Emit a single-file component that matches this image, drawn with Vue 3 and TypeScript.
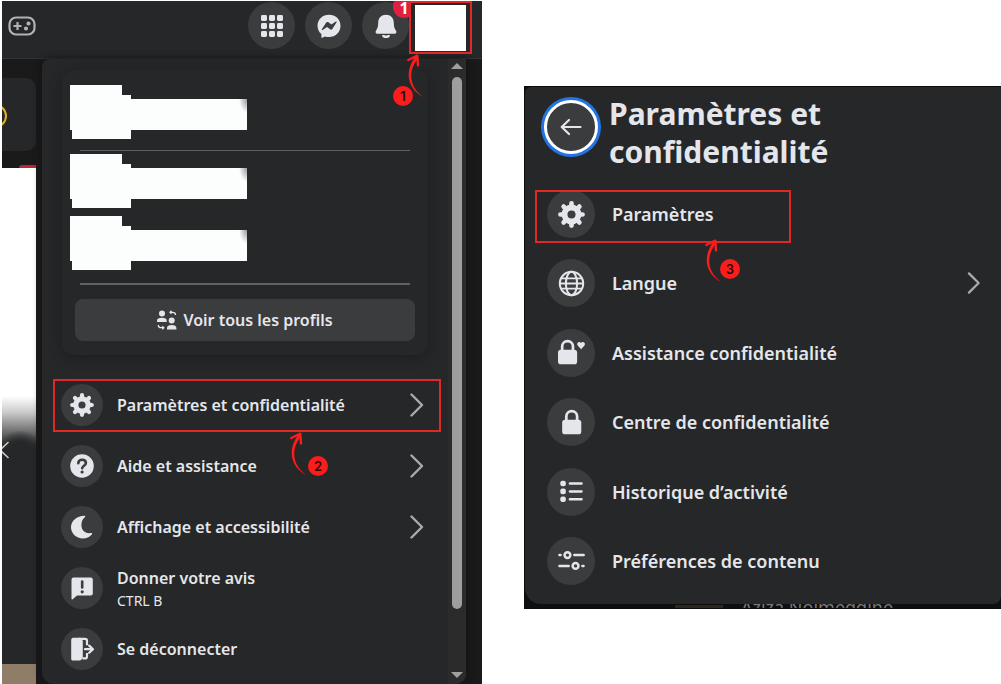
<script setup lang="ts">
interface MenuItem {
  icon: string
  label: string
  hint?: string
  chevron?: boolean
  step?: number
}

const topActions = [
  { icon: 'grid', label: 'Menu' },
  { icon: 'messenger', label: 'Messenger' },
  { icon: 'bell', label: 'Notifications', badge: '1' },
]

const accountItems: MenuItem[] = [
  { icon: 'gear', label: 'Paramètres et confidentialité', chevron: true, step: 2 },
  { icon: 'help', label: 'Aide et assistance', chevron: true },
  { icon: 'moon', label: 'Affichage et accessibilité', chevron: true },
  { icon: 'feedback', label: 'Donner votre avis', hint: 'CTRL B' },
  { icon: 'logout', label: 'Se déconnecter' },
]

const privacyItems: MenuItem[] = [
  { icon: 'gear', label: 'Paramètres', step: 3 },
  { icon: 'globe', label: 'Langue', chevron: true },
  { icon: 'lockheart', label: 'Assistance confidentialité' },
  { icon: 'lock', label: 'Centre de confidentialité' },
  { icon: 'list', label: 'Historique d’activité' },
  { icon: 'sliders', label: 'Préférences de contenu' },
]
</script>

<template>
  <svg class="sprite" aria-hidden="true">
    <symbol id="i-grid" viewBox="0 0 24 24">
      <g fill="currentColor">
        <template v-for="r in 3" :key="r">
          <rect v-for="c in 3" :key="c" :x="c * 8 - 7" :y="r * 8 - 7" width="6" height="6" rx="1.4" />
        </template>
      </g>
    </symbol>
    <symbol id="i-messenger" viewBox="0 0 24 24">
      <path fill="currentColor" fill-rule="evenodd" d="M12 .8C5.500 .8.500 5.600.500 11.800c0 3.400 1.500 6.300 3.900 8.300v3.200c0 .5.500.7.900.5l2.700-1.300c1.300.4 2.600.6 4 .6 6.500 0 11.500-4.900 11.500-11.300S18.500.8 12 .8zM4.900 15.300l4.300-6.700c.5-.8 1.500-.9 2.200-.4l3 2.300 4.500-2.900c.6-.4 1.100.2.700.7l-4.300 6.600c-.5.8-1.500 1-2.200.4l-3-2.300-4.500 3c-.6.400-1.100-.2-.7-.7z" />
    </symbol>
    <symbol id="i-bell" viewBox="0 0 24 24">
      <path fill="currentColor" d="M12 .8c-4.600 0-7.800 3.300-7.800 7.800 0 4.500-.8 6-2.200 8.200-.9 1.500-.3 2.900 1.300 2.900h17.400c1.600 0 2.200-1.400 1.300-2.900-1.400-2.200-2.200-3.700-2.200-8.200C19.800 4.100 16.600.8 12 .8zM8 20.900a4 3.100 0 0 0 8 0h-2.500a1.600 1 0 0 1-3 0z" />
    </symbol>
    <symbol id="i-gear" viewBox="0 0 24 24">
      <g fill="none" stroke="currentColor">
        <circle cx="12" cy="12" r="6.200" stroke-width="5.200" />
        <path d="M12 2.200v2M12 19.800v2M2.200 12h2M19.800 12h2M5 5l1 1M18 18l1 1M19 5l-1 1M6 18l-1 1" stroke-width="4.200" stroke-linecap="round" />
      </g>
    </symbol>
    <symbol id="i-help" viewBox="0 0 24 24">
      <circle cx="12" cy="12" r="11.800" fill="currentColor" />
      <path d="M8.300 9.200c0-2.200 1.600-3.500 3.800-3.500s3.800 1.300 3.800 3.300c0 2.700-3.700 2.700-3.700 5.300" fill="none" stroke="#3b3c3e" stroke-width="2.600" stroke-linecap="round" />
      <circle cx="12.100" cy="18" r="1.600" fill="#3b3c3e" />
    </symbol>
    <symbol id="i-moon" viewBox="0 0 24 24">
      <path fill="currentColor" d="M14.800 2.300c.9-.5.5-1.500-.4-1.500C6.800.9 1 5.900 1 12.300c0 6.200 5.400 11.100 11.700 11.100 3.600 0 7-1.400 9.100-3.900.7-.8.2-1.600-.8-1.400-6 .9-9.600-2.700-9.600-8 0-3.300 1.200-6.200 3.400-7.800z" />
    </symbol>
    <symbol id="i-feedback" viewBox="0 0 24 24">
      <path fill="currentColor" d="M3.500 1.500h17.300a2 2 0 0 1 2 2v14a2 2 0 0 1-2 2H7l-4.300 3.800c-.7.500-1.200.2-1.200-.5V3.500a2 2 0 0 1 2-2z" />
      <path d="M12.200 5.500v6" stroke="#3b3c3e" stroke-width="2.600" stroke-linecap="round" />
      <circle cx="12.200" cy="15.800" r="1.600" fill="#3b3c3e" />
    </symbol>
    <symbol id="i-logout" viewBox="0 0 24 24">
      <path fill="currentColor" d="M2.800.8h7.500l2.500 3v17.500l-2.500 2.300H3.500A2.300 2.300 0 0 1 1.200 21V3A2.200 2.200 0 0 1 2.800.8z" />
      <path d="M9 1.800h6a2 2 0 0 1 2 2v4.400M17 16v3.400a2 2 0 0 1-2 2h-2.500" fill="none" stroke="currentColor" stroke-width="2.200" />
      <path d="M15 12.200h7M19.200 8.600l3.800 3.600-3.800 3.600" fill="none" stroke="currentColor" stroke-width="2.200" stroke-linecap="round" stroke-linejoin="round" />
    </symbol>
    <symbol id="i-globe" viewBox="0 0 24 24">
      <g fill="none" stroke="currentColor" stroke-width="1.800">
        <circle cx="12" cy="12" r="10.400" />
        <ellipse cx="12" cy="12" rx="5" ry="10.400" />
        <path d="M2.500 7.500h19M2.500 16.500h19M1.600 12h20.800" stroke-width="1.600" />
      </g>
    </symbol>
    <symbol id="i-lock" viewBox="0 0 24 24">
      <rect x="3.700" y="9.500" width="17" height="13" rx="2.600" fill="currentColor" />
      <path d="M7.400 11V6.700a4.800 4.800 0 0 1 9.600 0V11" fill="none" stroke="currentColor" stroke-width="2.400" />
    </symbol>
    <symbol id="i-lockheart" viewBox="0 0 24 24">
      <rect x="0" y="9.500" width="17" height="13" rx="2.600" fill="currentColor" />
      <path d="M3.700 11V6.700a4.800 4.800 0 0 1 9.600 0V11" fill="none" stroke="currentColor" stroke-width="2.400" />
      <path fill="currentColor" d="M20.500 9l-3-3.200c-.9-1.200-.3-3.200 1.300-3.200.8 0 1.400.4 1.700 1 .3-.6.900-1 1.700-1 1.600 0 2.200 2 1.300 3.200z" />
    </symbol>
    <symbol id="i-list" viewBox="0 0 24 24">
      <g fill="currentColor">
        <template v-for="r in 3" :key="r">
          <rect x="2" :y="r * 7 - 4.600" width="5" height="5" rx="2" />
          <rect x="9.500" :y="r * 7 - 3.200" width="12.500" height="2.200" rx="1" />
        </template>
      </g>
    </symbol>
    <symbol id="i-sliders" viewBox="0 0 24 24">
      <g fill="none" stroke="currentColor" stroke-width="2.200" stroke-linecap="round">
        <path d="M1.300 7.200h1M14.500 7.200h8.300M1.300 16.800h8.200M21.700 16.800h1" />
        <circle cx="8.400" cy="7.200" r="2.600" />
        <circle cx="15.600" cy="16.800" r="2.600" />
      </g>
    </symbol>
    <symbol id="i-chevron" viewBox="0 0 14 24">
      <path d="M1.500 1.500L12 12 1.500 22.500" fill="none" stroke="currentColor" stroke-width="2.400" stroke-linecap="round" stroke-linejoin="round" />
    </symbol>
    <symbol id="i-arrow" viewBox="0 0 18 46">
      <path fill="#fb1d1b" d="M16.500 44C9.500 41 2 33 1.700 23 1.500 15 4.500 9 8.500 3.500L11 5.500C7 10.500 4.300 16 4.300 23 4.300 32 9.500 39.500 16.500 44z" />
      <path d="M1.300 7L10.300 2.700 11 12.500" fill="none" stroke="#fb1d1b" stroke-width="2.400" stroke-linecap="round" stroke-linejoin="round" />
    </symbol>
  </svg>

  <main class="page">
    <section class="account">
      <header class="topbar">
        <a href="#" class="gaming" aria-label="Jeux">
          <svg viewBox="0 0 28 20" fill="none" stroke="currentColor" stroke-width="2.200">
            <rect x="1.500" y="1.500" width="25" height="17" rx="6.500" />
            <path d="M5.500 10h8M9.500 6v8" />
            <circle cx="20.500" cy="7.500" r="1" />
            <circle cx="18" cy="12.500" r="1" />
          </svg>
        </a>
        <nav class="actions">
          <button v-for="a in topActions" :key="a.icon" class="round" :aria-label="a.label">
            <svg><use :href="`#i-${a.icon}`" /></svg>
            <span v-if="a.badge" class="badge">{{ a.badge }}</span>
          </button>
          <button class="avatar" aria-label="Votre profil">
            <span class="photo"></span>
            <svg class="arrow"><use href="#i-arrow" /></svg>
            <span class="num">1</span>
          </button>
        </nav>
      </header>

      <div class="body">
        <aside class="feed">
          <div class="story"><span class="ring"></span></div>
          <div class="redhint"></div>
          <div class="blank"></div>
          <div class="post">
            <svg viewBox="0 0 8 18"><path d="M6 1.500L-2 9l8 7.500" fill="none" stroke="#c9cacc" stroke-width="1.600" stroke-linecap="round" /></svg>
          </div>
          <div class="photo-strip"></div>
        </aside>

        <div class="menu">
          <div class="menu-content">
            <div class="card">
              <div class="masked"><span class="face"></span><span class="name"></span></div>
              <hr class="first" />
              <div class="masked"><span class="face"></span><span class="name"></span></div>
              <div class="masked last"><span class="face"></span><span class="name"></span></div>
              <hr class="second" />
              <button class="all">
                <svg viewBox="0 0 20 20" fill="currentColor">
                  <circle cx="5" cy="3.500" r="3" />
                  <path d="M0 12V10.500C0 8.600 1.800 7.700 5 7.700s4.700.9 4.700 2.800V12z" />
                  <circle cx="14.700" cy="10.500" r="3" />
                  <path d="M10 19.500V18c0-1.900 1.700-3 4.700-3s4.700 1.100 4.700 3v1.500z" />
                  <path d="M13 2.300h2.800c1.700 0 2.700.8 2.700 2.700M14.500.8L13 2.300l1.500 1.600M1.300 15c0 1.900 1 2.700 2.700 2.700h2.800M5.300 16.200l1.500 1.500-1.500 1.500" fill="none" stroke="currentColor" stroke-width="1.300" />
                </svg>
                Voir tous les profils
              </button>
            </div>
            <ul class="rows">
              <li v-for="item in accountItems" :key="item.label">
                <button class="row" :class="{ marked: item.step }">
                  <span class="disc"><svg><use :href="`#i-${item.icon}`" /></svg></span>
                  <span class="text">{{ item.label }}<small v-if="item.hint">{{ item.hint }}</small></span>
                  <svg v-if="item.chevron" class="chevron"><use href="#i-chevron" /></svg>
                </button>
                <template v-if="item.step">
                  <svg class="arrow"><use href="#i-arrow" /></svg>
                  <span class="num">{{ item.step }}</span>
                </template>
              </li>
            </ul>
          </div>
          <div class="scrollbar" aria-hidden="true">
            <span class="up"></span>
            <span class="thumb"></span>
            <span class="down"></span>
          </div>
        </div>
      </div>
    </section>

    <section class="privacy">
      <div class="panel">
        <header class="heading">
          <button class="back" aria-label="Retour">
            <svg viewBox="0 0 22 18"><path d="M20.500 9H2M9 2L1.700 9 9 16" fill="none" stroke="currentColor" stroke-width="2.200" stroke-linecap="round" stroke-linejoin="round" /></svg>
          </button>
          <h1>Paramètres et confidentialité</h1>
        </header>
        <ul class="options">
          <li v-for="item in privacyItems" :key="item.label">
            <button class="option">
              <span class="disc"><svg><use :href="`#i-${item.icon}`" /></svg></span>
              <span class="text">{{ item.label }}</span>
              <svg v-if="item.chevron" class="chevron"><use href="#i-chevron" /></svg>
            </button>
            <template v-if="item.step">
              <span class="frame"></span>
              <svg class="arrow"><use href="#i-arrow" /></svg>
              <span class="num">{{ item.step }}</span>
            </template>
          </li>
        </ul>
      </div>
      <div class="beneath"><span class="thumbs"></span><span class="contact">Aziza Noimeggine</span></div>
    </section>
  </main>
</template>

<style>
body {
  margin: 0;
  background: #fff;
}
</style>

<style scoped>
* {
  box-sizing: border-box;
}
.sprite {
  position: absolute;
  width: 0;
  height: 0;
}
.page {
  display: grid;
  grid-template-columns: minmax(0, 480fr) minmax(0, 477fr);
  column-gap: 42px;
  align-items: start;
  min-height: 100vh;
  padding: 1px 0 0 2px;
  font-family: "Noto Sans", "Open Sans", sans-serif;
  color: #e4e6eb;
}
button {
  margin: 0;
  padding: 0;
  border: 0;
  background: none;
  color: inherit;
  font: inherit;
  text-align: left;
}
ul {
  margin: 0;
  padding: 0;
  list-style: none;
}
li {
  position: relative;
}
.account {
  align-self: stretch;
  display: flex;
  flex-direction: column;
  background: #1a1a1b;
}
.topbar {
  display: flex;
  justify-content: space-between;
  height: 58px;
  padding: 1px 10px 0 6px;
  background: #252728;
  border-bottom: 1px solid #333435;
}
.gaming {
  display: flex;
  margin-top: 14px;
  height: 20px;
  color: #b0b3b8;
}
.gaming svg {
  width: 28px;
  height: 20px;
}
.actions {
  display: flex;
  gap: 10px;
}
.round {
  position: relative;
  display: flex;
  align-items: center;
  justify-content: center;
  width: 47px;
  height: 47px;
  border-radius: 50%;
  background: #3b3c3e;
}
.round svg {
  width: 24px;
  height: 24px;
}
.badge {
  position: absolute;
  top: -1px;
  right: -6px;
  width: 22px;
  height: 17px;
  border-radius: 3px 3px 11px 11px;
  background: #e02040;
  color: #fff;
  font-size: 16px;
  font-weight: 700;
  line-height: 14px;
  text-align: center;
}
.avatar {
  position: relative;
  width: 63px;
  height: 53px;
  margin: -1px 0 0 -10px;
  padding: 0 4px;
  border: 2px solid #e32726;
  background: #252728;
}
.photo {
  display: block;
  height: 46px;
  background: #fff;
}
.arrow {
  position: absolute;
  z-index: 2;
  width: 18px;
  height: 46px;
}
.num {
  position: absolute;
  z-index: 2;
  width: 20px;
  height: 20px;
  border-radius: 50%;
  background: #fb1d1b;
  color: #2a0d0d;
  font-family: Inter, sans-serif;
  font-size: 13px;
  font-weight: 600;
  line-height: 20px;
  text-align: center;
}
.avatar .arrow {
  left: -4px;
  top: 50px;
}
.avatar .num {
  left: -18px;
  top: 83px;
}
.body {
  flex: 1;
  display: flex;
}
.feed {
  flex: none;
  width: 34px;
  margin-right: 6px;
  padding-top: 19px;
  display: flex;
  flex-direction: column;
}
.story {
  height: 73px;
  padding-top: 26px;
  overflow: hidden;
  border-radius: 0 10px 10px 0;
  background: #252728;
}
.ring {
  display: block;
  width: 24px;
  height: 24px;
  margin-left: -19px;
  border: 2px solid #e0b02c;
  border-radius: 50%;
}
.redhint {
  height: 3px;
  margin: 14px 0 0 17px;
  border-radius: 6px 0 0 0;
  background: #c02434;
}
.blank {
  height: 282px;
  background:
    radial-gradient(ellipse 22px 20px at 18px 100%, #252728 40%, transparent 100%),
    linear-gradient(#fff 228px, #ccc 244px, #777 262px, #333 276px, #252728);
}
.post {
  flex: 1;
  background: #252728;
}
.post svg {
  display: block;
  width: 8px;
  height: 18px;
  margin-top: -9px;
  position: relative;
}
.photo-strip {
  height: 20px;
  background: #8f7d67;
}
.menu {
  flex: 1;
  min-width: 0;
  display: flex;
  margin-right: 16px;
  border-radius: 8px 0 10px 12px;
  overflow: hidden;
  background: #252728;
  box-shadow: 0 0 8px #111;
}
.menu-content {
  flex: 1;
  min-width: 0;
  padding: 11px 7px 8px 11px;
}
.card {
  margin: 0 13px 24px 9px;
  padding: 15px 13px 14px;
  border-radius: 12px;
  box-shadow: 0 2px 12px #1d1e1f;
}
.masked {
  display: flex;
  height: 54px;
  margin-left: -5px;
}
.masked.last {
  margin-top: 8px;
}
.face {
  width: 61px;
  height: 54px;
  background: #fcfdfd;
  clip-path: polygon(0 0, 52px 0, 52px 10px, 61px 10px, 61px 54px, 2px 54px, 2px 45px, 0 45px);
}
.name {
  width: 116px;
  height: 31px;
  margin-top: 14px;
  background:
    radial-gradient(ellipse 8px 14px at 100% 0, #999 0, transparent 100%),
    #fcfdfd;
}
hr {
  height: 1px;
  margin: 11px 5px 3px;
  border: 0;
  background: #5f6163;
}
hr.second {
  height: 2px;
  margin: 13px 5px 14px;
}
.all {
  display: flex;
  align-items: center;
  justify-content: center;
  gap: 6px;
  width: 100%;
  height: 42px;
  border-radius: 8px;
  background: #3b3c3e;
  font-size: 16px;
  font-weight: 600;
}
.all svg {
  width: 20px;
  height: 20px;
}
.rows {
  display: flex;
  flex-direction: column;
  gap: 8px;
}
.row {
  display: flex;
  align-items: center;
  width: 100%;
  height: 53px;
  padding: 0 17px 1px 8px;
  font-size: 16px;
  font-weight: 600;
}
.row.marked {
  padding: 0 15px 1px 6px;
  border: 2px solid #e32726;
}
.disc {
  flex: none;
  display: flex;
  align-items: center;
  justify-content: center;
  width: 42px;
  height: 42px;
  border-radius: 50%;
  background: #3b3c3e;
}
.disc svg {
  width: 24px;
  height: 24px;
}
.text {
  flex: 1;
  min-width: 0;
  margin-left: 14px;
  line-height: 24px;
  white-space: nowrap;
}
.text small {
  display: block;
  font-size: 14px;
  font-weight: 400;
  line-height: 21px;
}
.chevron {
  flex: none;
  width: 14px;
  height: 24px;
  color: #a9abae;
}
.rows .arrow {
  left: 237px;
  top: 52px;
}
.rows .num {
  left: 255px;
  top: 77px;
}
.scrollbar {
  display: flex;
  flex-direction: column;
  align-items: center;
  width: 18px;
  padding: 4px 0 6px;
  background: #2b2b2c;
}
.up,
.down {
  border: 6px solid transparent;
  border-top-width: 0;
  border-bottom-color: #a0a0a0;
}
.down {
  border-width: 6px 6px 0;
  border-top-color: #a0a0a0;
}
.thumb {
  flex: 532 0 0;
  width: 10px;
  margin-top: 8px;
  border-radius: 5px;
  background: #9e9e9e;
}
.down {
  margin-top: 63px;
}
.privacy {
  margin-top: 85px;
  border: 1px solid #0c0c0c;
  border-width: 1px 0 1px 1px;
  background: #0f0f0f;
}
.panel {
  padding: 8px 20px 19px 22px;
  border-radius: 6px 0 8px 16px;
  background: #252728;
}
.heading {
  display: flex;
  align-items: flex-start;
  gap: 11px;
  margin-bottom: 19px;
}
.back {
  flex: none;
  display: flex;
  align-items: center;
  justify-content: center;
  width: 54px;
  height: 54px;
  margin: 5px 0 0 -3px;
  border: 3px solid #fff;
  border-radius: 50%;
  background: #3b3c3e;
  box-shadow: 0 0 0 3px #2374e1;
}
.back svg {
  width: 22px;
  height: 18px;
}
h1 {
  margin: 0;
  max-width: 300px;
  font-size: 30px;
  font-weight: 700;
  line-height: 38px;
}
.options {
  display: flex;
  flex-direction: column;
  justify-content: space-between;
  height: 395px;
}
.option {
  display: flex;
  align-items: center;
  width: 100%;
  font-size: 18px;
  font-weight: 600;
}
.option .disc {
  width: 48px;
  height: 48px;
}
.option .disc svg {
  width: 27px;
  height: 27px;
}
.option .text {
  margin-left: 17px;
}
.option .chevron {
  height: 22px;
}
.frame {
  position: absolute;
  left: -12px;
  top: 0;
  width: 256px;
  height: 53px;
  border: 2px solid #e32726;
}
.options .arrow {
  left: 158px;
  top: 48px;
}
.options .num {
  left: 173px;
  top: 69px;
}
.beneath {
  display: flex;
  align-items: flex-end;
  height: 4px;
  padding-left: 150px;
  overflow: hidden;
}
.thumbs {
  width: 48px;
  height: 3px;
  margin-right: 18px;
  background: #2b2822;
}
.contact {
  color: #77797b;
  font-size: 18px;
  line-height: 18px;
  margin-bottom: -8px;
}
</style>
